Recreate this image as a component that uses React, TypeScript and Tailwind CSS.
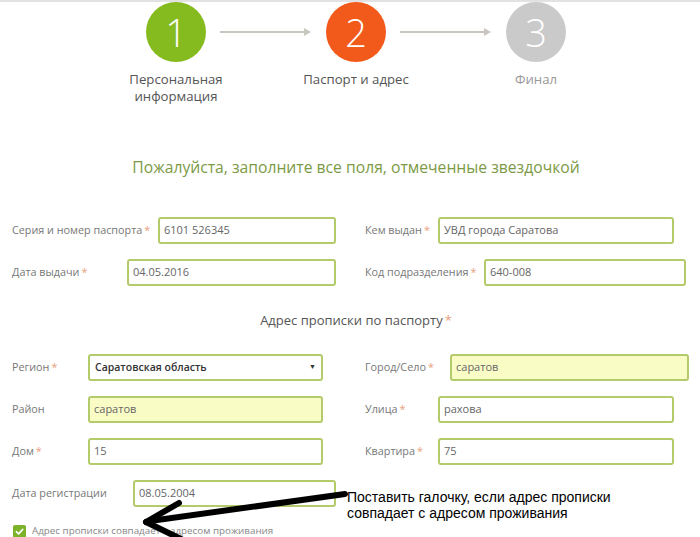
import React from 'react';

const font = { fontFamily: '"Open Sans", "Noto Sans", sans-serif' };

function Star() {
  return <span className="text-[#e8a07a] ml-[2px]">*</span>;
}

interface FieldProps {
  label: string;
  required?: boolean;
  value: string;
  labelW: string;
  inputW: string;
  yellow?: boolean;
}

function Field({ label, required, value, labelW, inputW, yellow }: FieldProps) {
  return (
    <div className="flex items-center h-[27px]">
      <div className={`${labelW} shrink-0 whitespace-nowrap text-[10.8px] text-[#777]`}>
        {label}
        {required && <Star />}
      </div>
      <div
        className={`${inputW} h-[27px] shrink-0 border-2 border-[#b3cb6a] rounded-[3px] flex items-center px-[4px] text-[11px] text-[#666] ${
          yellow ? 'bg-[#fafcc6]' : 'bg-white'
        }`}
      >
        {value}
      </div>
    </div>
  );
}

function Step({ n, color, label, labelColor }: { n: string; color: string; label: React.ReactNode; labelColor: string }) {
  return (
    <div className="w-[60px] flex flex-col items-center">
      <div className={`w-[60px] h-[60px] shrink-0 rounded-full ${color} flex items-center justify-center text-white text-[38px] font-light leading-none`}>
        {n}
      </div>
      <div className={`mt-[9px] whitespace-nowrap text-[13.2px] leading-[17px] text-center ${labelColor}`}>{label}</div>
    </div>
  );
}

function Arrow() {
  return (
    <svg width="92" height="10" viewBox="0 0 92 10" className="mt-[25px] mx-[14px]">
      <line x1="0" y1="5" x2="86" y2="5" stroke="#c9c6c0" strokeWidth="2" />
      <path d="M84 1 L91 5 L84 9 Z" fill="#c9c6c0" />
    </svg>
  );
}

export default function App() {
  return (
    <div className="relative w-[700px] h-[537px] overflow-hidden bg-white border-t-2 border-[#e2e2e2]" style={font}>
      <div className="flex justify-center pl-[12px]">
        <Step n="1" color="bg-[#86bb1f]" label={<>Персональная<br />информация</>} labelColor="text-[#555]" />
        <Arrow />
        <Step n="2" color="bg-[#f25a1c]" label="Паспорт и адрес" labelColor="text-[#555]" />
        <Arrow />
        <Step n="3" color="bg-[#cacaca]" label="Финал" labelColor="text-[#999]" />
      </div>

      <div className="mt-[51px] text-center text-[15.7px] text-[#7c9a45] pl-[12px]">
        Пожалуйста, заполните все поля, отмеченные звездочкой
      </div>

      <div className="mt-[37px] grid grid-cols-[350px_350px] gap-y-[15px]">
        <div className="pl-[12px]">
          <Field label="Серия и номер паспорта" required value="6101 526345" labelW="w-[146px]" inputW="w-[178px]" />
        </div>
        <div className="pl-[15px]">
          <Field label="Кем выдан" required value="УВД города Саратова" labelW="w-[73px]" inputW="w-[236px]" />
        </div>
        <div className="pl-[12px]">
          <Field label="Дата выдачи" required value="04.05.2016" labelW="w-[115px]" inputW="w-[209px]" />
        </div>
        <div className="pl-[15px]">
          <Field label="Код подразделения" required value="640-008" labelW="w-[119px]" inputW="w-[202px]" />
        </div>
      </div>

      <div className="mt-[25px] mb-[24px] text-center text-[13px] text-[#555] pl-[12px]">
        Адрес прописки по паспорту
        <Star />
      </div>

      <div className="grid grid-cols-[350px_350px] gap-y-[15px]">
        <div className="pl-[12px] flex items-center h-[27px]">
          <div className="w-[76px] shrink-0 text-[10.8px] text-[#777]">
            Регион
            <Star />
          </div>
          <div className="w-[235px] h-[27px] border-2 border-[#b3cb6a] rounded-[3px] flex items-center justify-between px-[5px] bg-white">
            <span className="text-[10.5px] font-semibold text-[#333]">Саратовская область</span>
            <span className="text-[7px] text-[#333]">▼</span>
          </div>
        </div>
        <div className="pl-[15px]">
          <Field label="Город/Село" required value="саратов" labelW="w-[85px]" inputW="w-[239px]" yellow />
        </div>
        <div className="pl-[12px]">
          <Field label="Район" value="саратов" labelW="w-[76px]" inputW="w-[235px]" yellow />
        </div>
        <div className="pl-[15px]">
          <Field label="Улица" required value="рахова" labelW="w-[73px]" inputW="w-[236px]" />
        </div>
        <div className="pl-[12px]">
          <Field label="Дом" required value="15" labelW="w-[76px]" inputW="w-[235px]" />
        </div>
        <div className="pl-[15px]">
          <Field label="Квартира" required value="75" labelW="w-[73px]" inputW="w-[236px]" />
        </div>
        <div className="pl-[12px]">
          <Field label="Дата регистрации" value="08.05.2004" labelW="w-[121px]" inputW="w-[203px]" />
        </div>
      </div>

      <div className="mt-[17px] pl-[13px] flex items-center gap-[6px]">
        <div className="w-[13px] h-[13px] rounded-[2px] bg-[#7cb32a] flex items-center justify-center">
          <svg width="9" height="9" viewBox="0 0 10 10">
            <path d="M1.5 5.2 L4 7.6 L8.6 2.6" stroke="white" strokeWidth="1.8" fill="none" strokeLinecap="round" strokeLinejoin="round" />
          </svg>
        </div>
        <span className="text-[9.8px] text-[#888]">Адрес прописки совпадает с адресом проживания</span>
      </div>

      {/* annotation overlay */}
      <svg className="absolute left-0 top-0 pointer-events-none" width="700" height="537" viewBox="0 0 700 537">
        <line x1="345" y1="492" x2="150" y2="519" stroke="#000" strokeWidth="6" strokeLinecap="round" />
        <line x1="146" y1="520" x2="179" y2="501" stroke="#000" strokeWidth="6" strokeLinecap="round" />
        <line x1="146" y1="520" x2="181" y2="537" stroke="#000" strokeWidth="6" strokeLinecap="round" />
      </svg>
      <div
        className="absolute left-[347px] top-[487px] text-[14px] leading-[16px] text-black whitespace-nowrap"
        style={{ fontFamily: '"Liberation Sans", Arial, sans-serif' }}
      >
        Поставить галочку, если адрес прописки
        <br />
        совпадает с адресом проживания
      </div>
    </div>
  );
}
